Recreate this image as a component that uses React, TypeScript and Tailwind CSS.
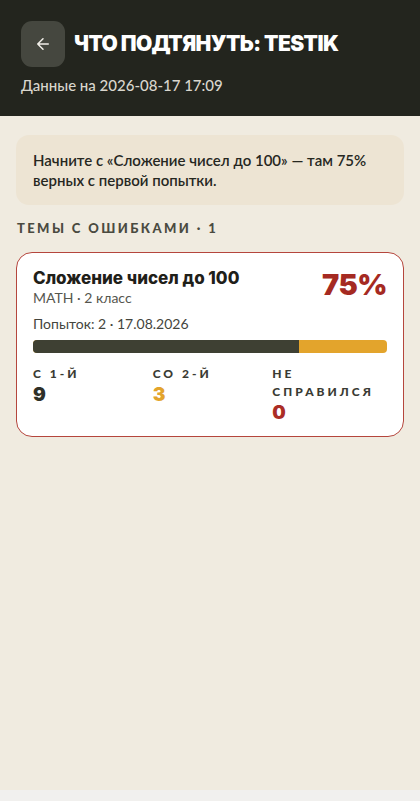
import React from 'react';

const display = "font-['Inter','Noto_Sans',sans-serif]";
const body = "font-['Lato','Noto_Sans',sans-serif]";

interface Stat {
  label: string;
  value: number;
  color: string;
}

const stats: Stat[] = [
  { label: 'С 1-й', value: 9, color: 'text-[#2e3028]' },
  { label: 'Со 2-й', value: 3, color: 'text-[#e3a42c]' },
  { label: 'Не справился', value: 0, color: 'text-[#ab2d25]' },
];

function Header() {
  return (
    <header className="bg-[#23251e] px-[21px] pt-[21px] pb-[19px]">
      <div className="flex items-center gap-[9px]">
        <button
          className="w-[44px] h-[46px] rounded-[11px] bg-[#45473f] flex items-center justify-center text-[#f2f0ea]"
          aria-label="Назад"
        >
          <svg width="18" height="18" viewBox="0 0 24 24" fill="none" stroke="currentColor" strokeWidth={2} strokeLinecap="round" strokeLinejoin="round">
            <path d="M19 12H5M12 19l-7-7 7-7" />
          </svg>
        </button>
        <h1 className={`${display} text-white text-[21px] font-black uppercase tracking-[-0.6px]`}>
          Что подтянуть: testik
        </h1>
      </div>
      <p className={`${body} mt-[7px] text-[15px] font-medium text-[#d9d6cd]`}>Данные на 2026-08-17 17:09</p>
    </header>
  );
}

function TopicCard() {
  return (
    <div className="bg-white border-[1.5px] border-[#b5463d] rounded-[16px] px-[16px] pt-[15px] pb-[11px]">
      <div className="flex justify-between items-start">
        <div>
          <div className={`${display} text-[17px] font-extrabold text-[#1f2019] leading-[20px]`}>Сложение чисел до 100</div>
          <div className={`${body} text-[14px] text-[#55564e] leading-[20px]`}>MATH · 2 класс</div>
        </div>
        <div className={`${display} text-[29px] font-black text-[#a52a22] leading-[34px] tracking-[-0.5px]`}>75%</div>
      </div>
      <div className={`${body} mt-[6px] text-[14px] text-[#44453d] leading-[20px]`}>Попыток: 2 · 17.08.2026</div>
      <div className="mt-[6px] h-[13px] rounded-[4px] overflow-hidden flex bg-[#e3a42c]">
        <div className="h-full bg-[#3e4033]" style={{ width: '75%' }} />
      </div>
      <div className="mt-[12px] grid grid-cols-3 gap-x-[5px]">
        {stats.map((s) => (
          <div key={s.label}>
            <div className={`${body} text-[12px] font-black uppercase tracking-[3px] text-[#3a3b33] leading-[18px]`}>{s.label}</div>
            <div className={`${display} text-[19px] font-black leading-[24px] ${s.color}`}>{s.value}</div>
          </div>
        ))}
      </div>
    </div>
  );
}

export default function App() {
  return (
    <div className="bg-[#f1f0ee] min-h-[801px]">
      <div className="h-[790px] bg-[#f0ebe0]">
        <Header />
        <main className="px-[16px] pt-[19px]">
          <div className={`${body} bg-[#ede4d3] rounded-[13px] px-[17px] py-[15px] text-[15px] font-semibold leading-[20px] text-[#26271f]`}>
            Начните с «Сложение чисел до 100» — там 75% верных с первой попытки.
          </div>
          <h2 className={`${body} mt-[14px] ml-[1px] text-[13px] font-black uppercase tracking-[2.4px] text-[#4a4a40]`}>
            Темы с ошибками · 1
          </h2>
          <div className="mt-[14px]">
            <TopicCard />
          </div>
        </main>
      </div>
    </div>
  );
}
